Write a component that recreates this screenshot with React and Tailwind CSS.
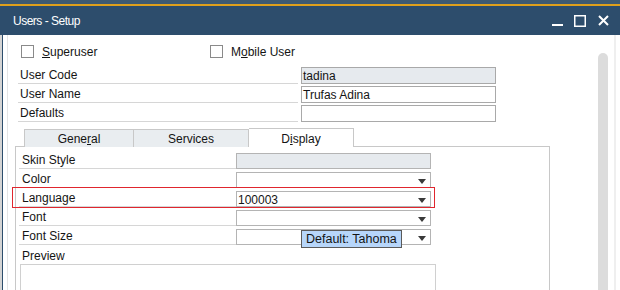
import React from "react";

const font = { fontFamily: '"Liberation Sans", Arial, sans-serif' };

const Arrow = () => (
    <svg width="8" height="5" viewBox="0 0 8 5" className="absolute right-[4px] top-[6px]">
        <path d="M0 0h8L4 5z" fill="#3a3a3a" />
    </svg>
);

const Checkbox = ({ children }) => (
    <div className="flex items-center gap-[8px]">
        <div className="w-[13px] h-[13px] border border-[#8a8a8a] bg-white" />
        <span className="pt-[2px]">{children}</span>
    </div>
);

const FormRow = ({ label, value, grey }) => (
    <div className="flex h-[19px]">
        <div className="w-[280px] h-full border-b border-[#d6d6d6] flex items-center pl-[2px] pt-[2px]">{label}</div>
        <div
            className={`ml-[3px] w-[195px] h-[17px] self-end border border-[#a9a9a9] flex items-center pl-[1px] pt-[1px] leading-none ${
                grey ? "bg-[#e6eaee]" : "bg-white"
            }`}
        >
            {value}
        </div>
    </div>
);

const PanelRow = ({ label, value, grey, combo, children }) => (
    <div className="flex h-[19px] relative">
        <div className="w-[217px] h-full border-b border-[#d6d6d6] flex items-center pl-[3px] pt-[2px]">{label}</div>
        <div
            className={`relative w-[195px] h-[16px] self-end border border-[#b4b4b4] flex items-center pl-[1px] pt-[1px] leading-none ${
                grey ? "bg-[#e6eaee]" : "bg-white"
            }`}
        >
            {value}
            {combo && <Arrow />}
        </div>
        {children}
    </div>
);

export default function App() {
    return (
        <div className="w-[620px] h-[290px] overflow-hidden bg-white text-[12px] text-[#141414] flex flex-col" style={font}>
            {/* window chrome */}
            <div className="h-[4px] bg-[#3e5a72]" />
            <div className="h-[2px] bg-[#dfa01c]" />
            <div className="h-[29px] bg-[#2d4d6c] flex items-center pl-[13px] pr-[11px] text-white">
                <span className="text-[12px] tracking-[-0.5px] mt-[1px]">Users - Setup</span>
                <div className="ml-auto flex items-center">
                    <svg width="12" height="12" viewBox="0 0 12 12">
                        <path d="M0 10h11" stroke="white" strokeWidth="2" />
                    </svg>
                    <svg width="12" height="12" viewBox="0 0 12 12" className="ml-[10px]">
                        <rect x="0.75" y="0.75" width="10.5" height="10.5" fill="none" stroke="white" strokeWidth="1.5" />
                    </svg>
                    <svg width="11" height="11" viewBox="0 0 11 11" className="ml-[12px]">
                        <path d="M1 1l9 9M10 1l-9 9" stroke="white" strokeWidth="2" />
                    </svg>
                </div>
            </div>

            <div className="flex flex-1 min-h-0">
                {/* left frame */}
                <div className="w-[2px] bg-[#d4d4d4]" />
                <div className="w-[1px] bg-[#2d4d6c]" />
                <div className="w-[4px]" />
                <div className="w-[1px] bg-[#e4e4e4]" />
                <div className="w-[1px]" />

                {/* form */}
                <div className="w-[589px] flex flex-col pt-[9px]">
                    <div className="flex h-[14px] items-center pl-[12px]">
                        <div className="w-[189px]">
                            <Checkbox>
                                <span className="underline">S</span>uperuser
                            </Checkbox>
                        </div>
                        <Checkbox>
                            M<span className="underline">o</span>bile User
                        </Checkbox>
                    </div>

                    <div className="flex flex-col pl-[9px] mt-[7px]">
                        <FormRow label="User Code" value="tadina" grey />
                        <FormRow label="User Name" value="Trufas Adina" />
                        <FormRow label="Defaults" value="" />
                    </div>

                    {/* tabs */}
                    <div className="flex h-[19px] mt-[6px] pl-[15px] relative z-10">
                        <div className="w-[110px] h-[18px] self-end border border-b-0 border-[#c8c8c8] bg-[#e9edf0] flex items-center justify-center pt-[1px]">
                            Gene<span className="underline">r</span>al
                        </div>
                        <div className="w-[115px] h-[18px] self-end border border-l-0 border-b-0 border-[#c8c8c8] bg-[#e9edf0] flex items-center justify-center pt-[1px]">
                            Services
                        </div>
                        <div className="w-[105px] h-[19px] border border-l-0 border-b-0 border-[#c8c8c8] bg-white flex items-center justify-center pt-[2px]">
                            D<span className="underline">i</span>splay
                        </div>
                    </div>

                    {/* panel */}
                    <div className="ml-[6px] w-[535px] flex-1 -mt-[1px] border border-b-0 border-[#c8c8c8] flex flex-col pt-[3px] pl-[3px]">
                        <PanelRow label="Skin Style" value="" grey />
                        <PanelRow label="Color" value="" combo />
                        <PanelRow label="Language" value="100003" combo>
                            <div className="absolute left-[-7px] w-[423px] top-[-1px] h-[21px] border border-[#e0262e] pointer-events-none" />
                        </PanelRow>
                        <PanelRow label="Font" value="" combo />
                        <PanelRow label="Font Size" value="" combo>
                            <div className="absolute left-[282px] top-[4px] w-[101px] h-[18px] border border-[#5a5a5a] bg-[#b7d6fa] flex items-center pl-[4px] pt-[1px] text-[12.5px] z-10">
                                Default: Tahoma
                            </div>
                        </PanelRow>
                        <div className="h-[19px] flex items-center pl-[3px] pt-[2px]">Preview</div>
                        <div className="ml-[1px] w-[416px] flex-1 border border-b-0 border-[#d0d0d0]" />
                    </div>
                </div>

                {/* scrollbar */}
                <div className="w-[10px] pt-[18px] flex flex-col">
                    <div className="flex-1 bg-[#dcdcdc] rounded-t-full" />
                </div>
                <div className="w-[6px]" />
                <div className="w-[2px] bg-[#efefef]" />
            </div>
        </div>
    );
}
